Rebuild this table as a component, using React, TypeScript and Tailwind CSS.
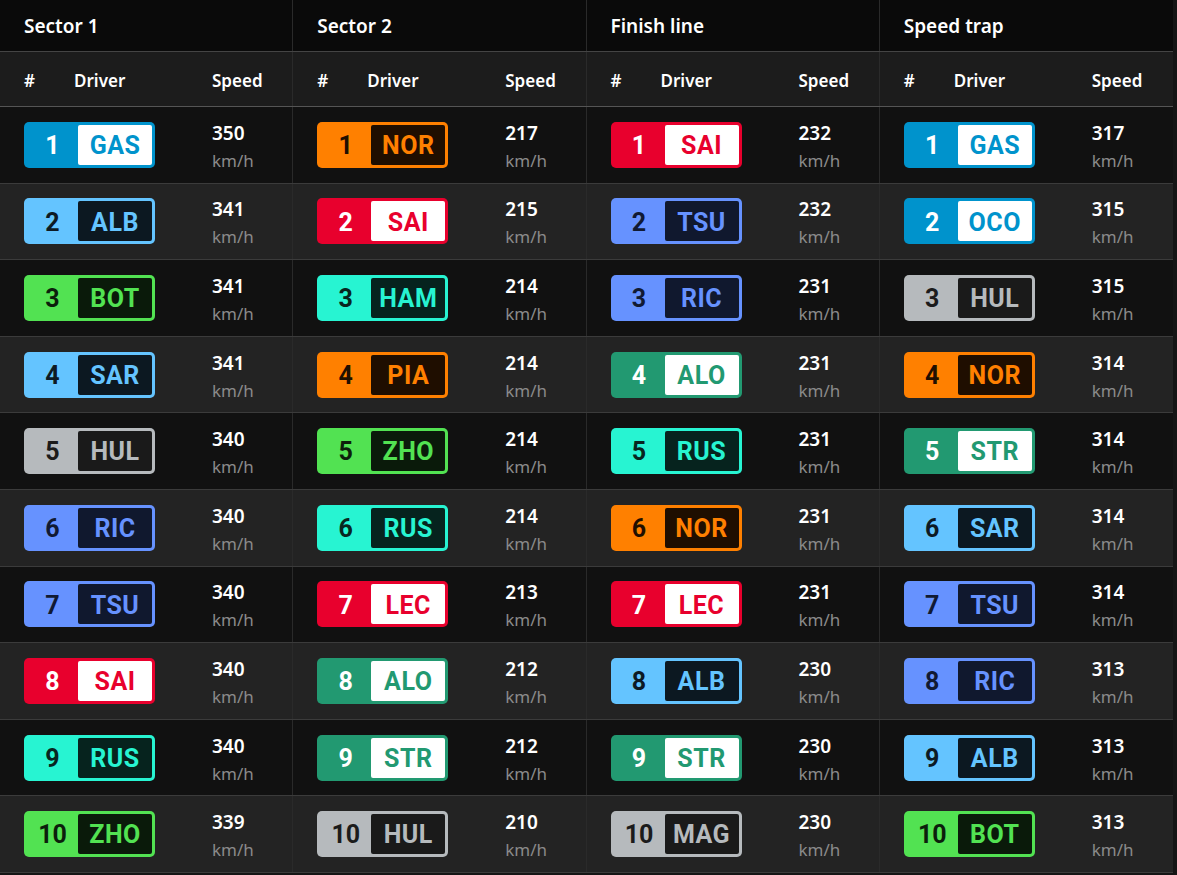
type Team =
  | "alpine"
  | "williams"
  | "sauber"
  | "haas"
  | "rb"
  | "ferrari"
  | "mercedes"
  | "mclaren"
  | "aston";

const teamStyles: Record<Team, { outer: string; num: string; inner: string; name: string }> = {
  alpine: { outer: "bg-[#0093cc]", num: "text-white", inner: "bg-white", name: "text-[#0093cc]" },
  williams: { outer: "bg-[#64c4ff]", num: "text-[#0d1a24]", inner: "bg-[#0c1821]", name: "text-[#64c4ff]" },
  sauber: { outer: "bg-[#52e252]", num: "text-[#0c1f0c]", inner: "bg-[#0a1a0a]", name: "text-[#52e252]" },
  haas: { outer: "bg-[#b6babd]", num: "text-[#1b1b1b]", inner: "bg-[#1a1a1a]", name: "text-[#b6babd]" },
  rb: { outer: "bg-[#6692ff]", num: "text-[#111a33]", inner: "bg-[#10182e]", name: "text-[#6692ff]" },
  ferrari: { outer: "bg-[#e8002d]", num: "text-white", inner: "bg-white", name: "text-[#e8002d]" },
  mercedes: { outer: "bg-[#27f4d2]", num: "text-[#082620]", inner: "bg-[#06231e]", name: "text-[#27f4d2]" },
  mclaren: { outer: "bg-[#ff8000]", num: "text-[#1f0f00]", inner: "bg-[#1f0e00]", name: "text-[#ff8000]" },
  aston: { outer: "bg-[#229971]", num: "text-white", inner: "bg-white", name: "text-[#229971]" },
};

const driverTeam: Record<string, Team> = {
  GAS: "alpine",
  OCO: "alpine",
  ALB: "williams",
  SAR: "williams",
  BOT: "sauber",
  ZHO: "sauber",
  HUL: "haas",
  MAG: "haas",
  RIC: "rb",
  TSU: "rb",
  SAI: "ferrari",
  LEC: "ferrari",
  RUS: "mercedes",
  HAM: "mercedes",
  NOR: "mclaren",
  PIA: "mclaren",
  ALO: "aston",
  STR: "aston",
};

const sections: { title: string; entries: [string, number][] }[] = [
  {
    title: "Sector 1",
    entries: [
      ["GAS", 350], ["ALB", 341], ["BOT", 341], ["SAR", 341], ["HUL", 340],
      ["RIC", 340], ["TSU", 340], ["SAI", 340], ["RUS", 340], ["ZHO", 339],
    ],
  },
  {
    title: "Sector 2",
    entries: [
      ["NOR", 217], ["SAI", 215], ["HAM", 214], ["PIA", 214], ["ZHO", 214],
      ["RUS", 214], ["LEC", 213], ["ALO", 212], ["STR", 212], ["HUL", 210],
    ],
  },
  {
    title: "Finish line",
    entries: [
      ["SAI", 232], ["TSU", 232], ["RIC", 231], ["ALO", 231], ["RUS", 231],
      ["NOR", 231], ["LEC", 231], ["ALB", 230], ["STR", 230], ["MAG", 230],
    ],
  },
  {
    title: "Speed trap",
    entries: [
      ["GAS", 317], ["OCO", 315], ["HUL", 315], ["NOR", 314], ["STR", 314],
      ["SAR", 314], ["TSU", 314], ["RIC", 313], ["ALB", 313], ["BOT", 313],
    ],
  },
];

function DriverBadge({ pos, code }: { pos: number; code: string }) {
  const t = teamStyles[driverTeam[code]];
  return (
    <div
      className={`flex h-[46px] w-[131px] rounded-[5px] p-[3px] font-['Roboto',sans-serif] text-[25px] font-bold ${t.outer}`}
    >
      <span className={`flex w-[51px] items-center justify-center pt-[2px] ${t.num}`}>{pos}</span>
      <span
        className={`flex flex-1 items-center justify-center rounded-[2px] pt-[2px] tracking-[0.5px] ${t.inner} ${t.name}`}
      >
        {code}
      </span>
    </div>
  );
}

export default function App() {
  return (
    <div className="min-h-screen bg-[#151515] font-['Noto_Sans',sans-serif]">
      <div className="w-[1173px]">
        {/* Section titles */}
        <div className="grid h-[52px] grid-cols-4 border-b border-[#444444] bg-[#0a0a0a]">
          {sections.map((s, i) => (
            <div
              key={s.title}
              className={`flex items-center pl-6 pt-[2px] text-[19px] font-semibold text-white ${
                i < 3 ? "border-r border-[#2a2a2a]" : ""
              }`}
            >
              {s.title}
            </div>
          ))}
        </div>

        {/* Column labels */}
        <div className="grid h-[55px] grid-cols-4 border-b border-[#555555] bg-[#1c1c1c]">
          {sections.map((s, i) => (
            <div
              key={s.title}
              className={`grid grid-cols-[50px_138px_1fr] items-center pl-6 pt-1 text-[17px] font-semibold text-white ${
                i < 3 ? "border-r border-[#2a2a2a]" : ""
              }`}
            >
              <span>#</span>
              <span>Driver</span>
              <span>Speed</span>
            </div>
          ))}
        </div>

        {/* Rows */}
        {Array.from({ length: 10 }).map((_, r) => (
          <div
            key={r}
            className={`grid h-[76.6px] grid-cols-4 border-b border-[#3b3b3b] ${
              r % 2 === 0 ? "bg-[#111111]" : "bg-[#232323]"
            }`}
          >
            {sections.map((s, i) => {
              const [code, speed] = s.entries[r];
              return (
                <div
                  key={s.title}
                  className={`grid grid-cols-[188px_1fr] items-center pl-6 ${
                    i < 3 ? "border-r border-[#2a2a2a]" : ""
                  }`}
                >
                  <DriverBadge pos={r + 1} code={code} />
                  <div className="flex flex-col pt-1 leading-[27px]">
                    <span className="text-[19px] font-semibold text-white">{speed}</span>
                    <span className="text-[17px] text-[#8a8a8a]">km/h</span>
                  </div>
                </div>
              );
            })}
          </div>
        ))}
      </div>
    </div>
  );
}
